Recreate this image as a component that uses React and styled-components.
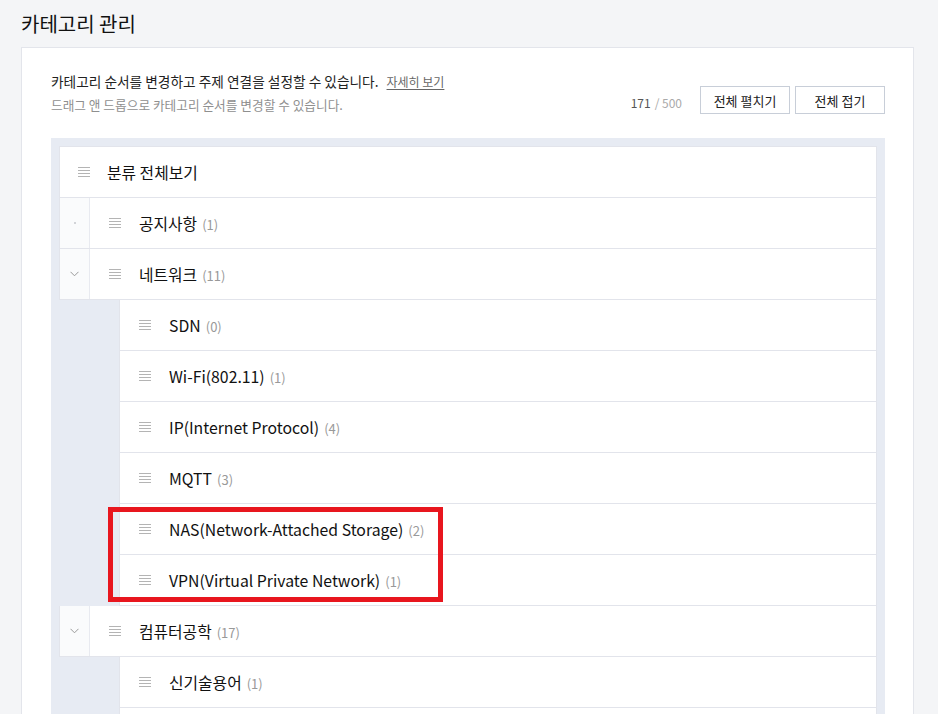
import React from "react";
import styled, { createGlobalStyle } from "styled-components";

const GlobalStyle = createGlobalStyle`
  body {
    margin: 0;
    background-color: #f4f5f7;
    font-family: "Noto Sans CJK KR", "Noto Sans", sans-serif;
    color: #222;
  }
`;

const Page = styled.div`
  padding: 10px 24px 0 21px;
`;

const Title = styled.h1`
  margin: 0 0 9px;
  font-size: 20px;
  font-weight: 400;
  line-height: 28px;
  color: #111;
`;

const Card = styled.div`
  background-color: #fff;
  border: 1px solid #e3e5eb;
  padding: 24px 28px 0 29px;
  min-height: 700px;
`;

const Header = styled.div`
  display: flex;
  justify-content: space-between;
  align-items: flex-end;
`;

const Info = styled.div`
  display: flex;
  flex-direction: column;
  gap: 4px;
`;

const InfoLine = styled.p`
  margin: 0;
  font-size: ${(p) => (p.$muted ? "12.7px" : "13.7px")};
  line-height: 19px;
  color: ${(p) => (p.$muted ? "#8f8f8f" : "#222")};
`;

const MoreLink = styled.a`
  margin-left: 8px;
  font-size: 12px;
  color: #666;
  text-decoration: underline;
  text-underline-offset: 2px;
`;

const Actions = styled.div`
  display: flex;
  align-items: center;
  gap: 5px;
`;

const Counter = styled.span`
  font-size: 12px;
  color: #555;
  margin-right: 13px;
  padding-top: 4px;

  em {
    font-style: normal;
    color: #aaa;
    margin-left: 4px;
  }
`;

const Button = styled.button`
  width: 90px;
  height: 28px;
  padding: 0;
  background-color: #fff;
  border: 1px solid #c8ced8;
  font-family: inherit;
  font-size: 13px;
  color: #222;
  cursor: pointer;
`;

const Tree = styled.div`
  margin-top: 24px;
  background-color: #e7ebf3;
  padding: 8px 8px 0;
`;

const List = styled.div`
  display: flex;
  flex-direction: column;
`;

const Row = styled.div`
  display: flex;
  align-items: stretch;
  height: ${(p) => (p.$top ? "52px" : "51px")};
  box-sizing: border-box;
  background-color: #fff;
  border: 1px solid #e2e4eb;
  border-top: ${(p) => (p.$top ? "1px solid #e2e4eb" : "none")};
  margin-left: ${(p) => (p.$child ? "60px" : "0")};
`;

const Toggle = styled.div`
  width: 29px;
  flex: none;
  display: flex;
  align-items: center;
  justify-content: center;
  background-color: #fafbfc;
  border-right: 1px solid #e8eaf0;
`;

const Dot = styled.span`
  width: 2px;
  height: 2px;
  background-color: #d2d4d8;
`;

const Body = styled.div`
  flex: 1;
  display: flex;
  align-items: center;
  padding-left: ${(p) => p.$pad || 19}px;
  gap: ${(p) => p.$gap || 18}px;
`;

const Handle = styled.span`
  width: 12px;
  flex: none;
  display: flex;
  flex-direction: column;
  gap: 2px;
  span {
    height: 1px;
    background-color: #b4b4b4;
  }
`;

const Name = styled.span`
  font-size: 15.8px;
  font-weight: 400;
  color: #111;
`;

const Count = styled.span`
  margin-left: 5px;
  font-size: 13px;
  color: #999;
`;

const Highlight = styled.div`
  position: relative;
  display: flex;
  flex-direction: column;
  &::after {
    content: "";
    position: absolute;
    left: 49px;
    top: 3px;
    width: 335px;
    height: 95px;
    box-sizing: border-box;
    border: 5px solid #e8161e;
    pointer-events: none;
  }
`;

const Chevron = () => (
  <svg width="9" height="6" viewBox="0 0 9 6" fill="none">
    <path d="M0.5 0.8 L4.5 4.8 L8.5 0.8" stroke="#999" strokeWidth="1" />
  </svg>
);

const DragHandle = () => (
  <Handle>
    <span />
    <span />
    <span />
    <span />
  </Handle>
);

const categories = [
  { name: "공지사항", count: 1, children: [] },
  {
    name: "네트워크",
    count: 11,
    children: [
      { name: "SDN", count: 0 },
      { name: "Wi-Fi(802.11)", count: 1 },
      { name: "IP(Internet Protocol)", count: 4 },
      { name: "MQTT", count: 3 },
      { name: "NAS(Network-Attached Storage)", count: 2, mark: true },
      { name: "VPN(Virtual Private Network)", count: 1, mark: true },
    ],
  },
  {
    name: "컴퓨터공학",
    count: 17,
    children: [
      { name: "신기술용어", count: 1 },
      { name: "자료구조", count: 3 },
    ],
  },
];

const ChildRow = ({ item }) => (
  <Row $child>
    <Body>
      <DragHandle />
      <div>
        <Name>{item.name}</Name>
        <Count>({item.count})</Count>
      </div>
    </Body>
  </Row>
);

const Category = ({ cat }) => {
  const plain = cat.children.filter((c) => !c.mark);
  const marked = cat.children.filter((c) => c.mark);
  return (
    <>
      <Row>
        <Toggle>{cat.children.length ? <Chevron /> : <Dot />}</Toggle>
        <Body>
          <DragHandle />
          <div>
            <Name>{cat.name}</Name>
            <Count>({cat.count})</Count>
          </div>
        </Body>
      </Row>
      {plain.map((c) => (
        <ChildRow key={c.name} item={c} />
      ))}
      {marked.length > 0 && (
        <Highlight>
          {marked.map((c) => (
            <ChildRow key={c.name} item={c} />
          ))}
        </Highlight>
      )}
    </>
  );
};

export default function App() {
  return (
    <>
      <GlobalStyle />
      <Page>
        <Title>카테고리 관리</Title>
        <Card>
          <Header>
            <Info>
              <InfoLine>
                카테고리 순서를 변경하고 주제 연결을 설정할 수 있습니다.
                <MoreLink>자세히 보기</MoreLink>
              </InfoLine>
              <InfoLine $muted>드래그 앤 드롭으로 카테고리 순서를 변경할 수 있습니다.</InfoLine>
            </Info>
            <Actions>
              <Counter>
                171<em>/ 500</em>
              </Counter>
              <Button>전체 펼치기</Button>
              <Button>전체 접기</Button>
            </Actions>
          </Header>
          <Tree>
            <List>
              <Row $top>
                <Body $pad={18} $gap={17}>
                  <DragHandle />
                  <Name>분류 전체보기</Name>
                </Body>
              </Row>
              {categories.map((cat) => (
                <Category key={cat.name} cat={cat} />
              ))}
            </List>
          </Tree>
        </Card>
      </Page>
    </>
  );
}
